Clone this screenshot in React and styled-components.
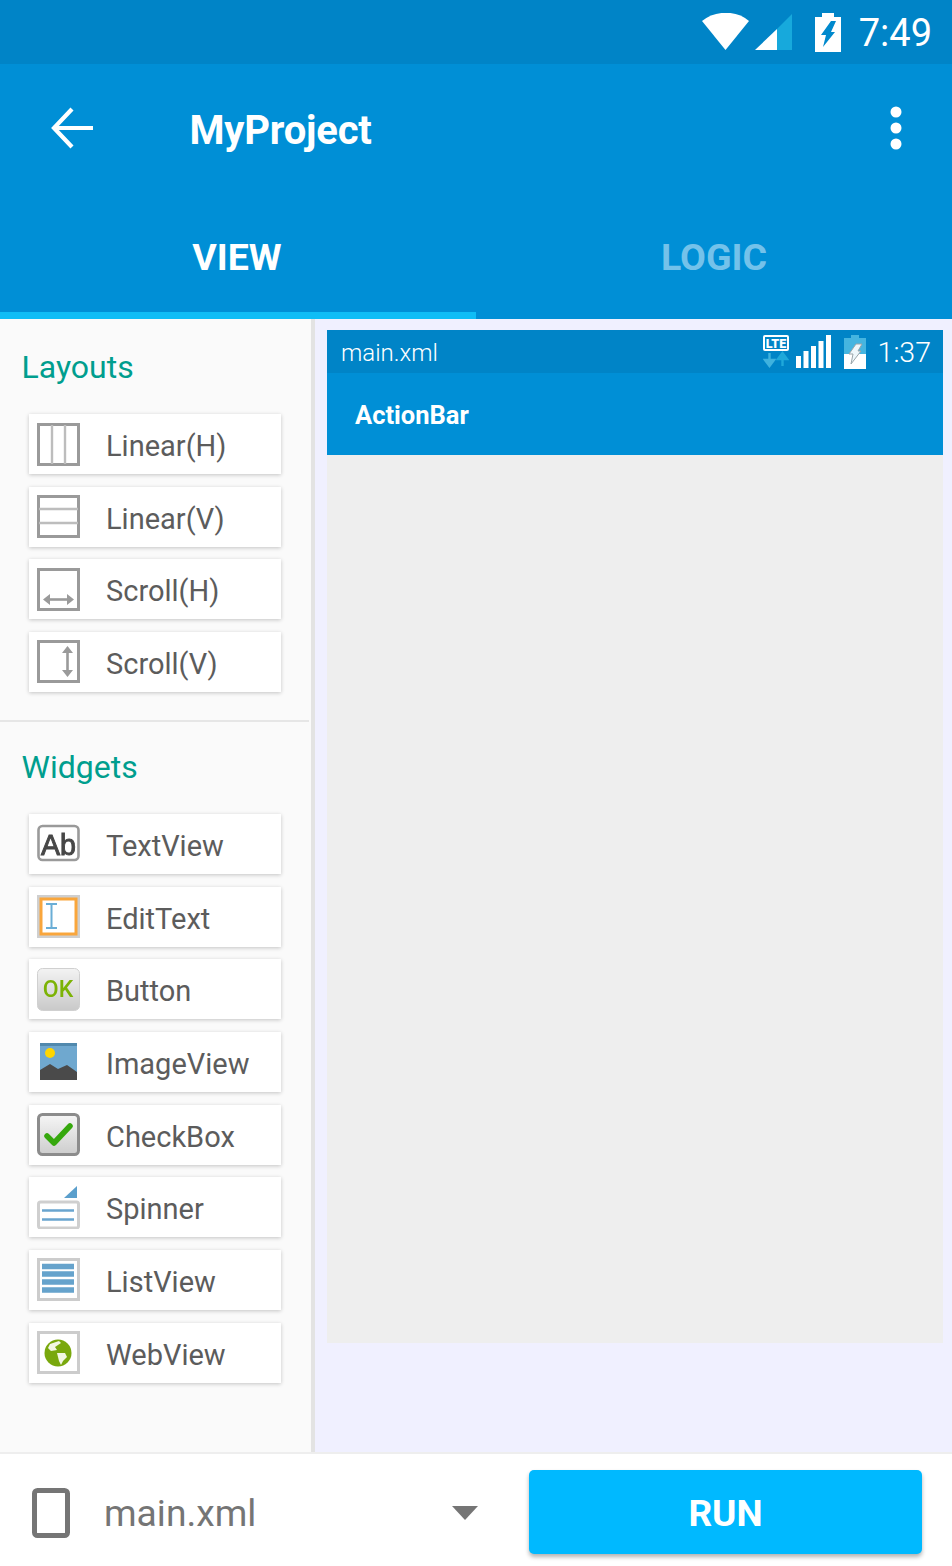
import React from "react";
import styled, { createGlobalStyle } from "styled-components";

const Global = createGlobalStyle`
  html, body { margin: 0; padding: 0; background: #fff; }
  * { box-sizing: border-box; }
  body { font-family: Roboto, "Noto Sans", sans-serif; }
`;

const Screen = styled.div`
  width: 952px; height: 1566px; display: flex; flex-direction: column; overflow: hidden;
`;
const StatusBar = styled.div`
  height: 64px; background: #0084c7; display: flex; align-items: center; justify-content: flex-end;
  padding-right: 20px; color: #fff;
`;
const StatusTime = styled.span`
  font-size: 38px; margin-left: 18px; color: #fff; line-height: 64px; position: relative; top: 1px;
`;
const AppBar = styled.div`
  height: 255px; background: #008fd6; display: flex; flex-direction: column;
`;
const ToolRow = styled.div`
  height: 128px; display: flex; align-items: center; padding: 0 0 0 50px;
`;
const Title = styled.div`
  font-size: 40px; font-weight: 700; color: #fff; margin-left: 93.5px; flex: 1; padding-top: 4px; letter-spacing: -0.2px;
`;
const Tabs = styled.div`
  height: 127px; display: flex;
`;
const Tab = styled.div`
  width: 476px; height: 127px; display: flex; align-items: center; justify-content: center;
  padding-top: 10px; font-size: 37.5px; font-weight: 700; color: ${p => p.$active ? "#fff" : "#74c2ea"};
  border-bottom: 7px solid ${p => p.$active ? "#0fbdf6" : "transparent"};
  padding-right: ${p => p.$active ? "2px" : "0"};
`;
const Body = styled.div`
  flex: 1; display: flex; min-height: 0;
`;
const Palette = styled.div`
  width: 315px; background: #fafafa; border-right: 4px solid #e3e3e3; display: flex; flex-direction: column;
`;
const Section = styled.div`
  display: flex; flex-direction: column;
`;
const SectionTitle = styled.div`
  color: #009e8e; font-size: 32px; line-height: 40px; padding-left: 21.5px; margin-top: ${p => p.$top}px; margin-bottom: 27px;
`;
const Items = styled.div`
  display: flex; flex-direction: column; gap: 12.67px; padding-left: 29px;
`;
const Item = styled.div`
  width: 252px; height: 60px; background: #fff; display: flex; align-items: center; padding-left: 8px;
  box-shadow: 0 1px 4px rgba(0,0,0,0.22);
`;
const IconBox = styled.svg`
  width: 43px; height: 43px; flex: none; display: block; filter: blur(0.45px);
`;
const ItemLabel = styled.span`
  margin-left: 26px; font-size: 29px; color: #5c5c5c; line-height: 60px; position: relative; top: 2px;
`;
const Divider = styled.div`
  height: 2px; background: #e6e6e6; width: 309px; margin-top: 28px;
`;
const Stage = styled.div`
  flex: 1; background: #f0f0ff; padding: 11px 9px 109px 12px; display: flex; min-width: 0;
`;
const Device = styled.div`
  flex: 1; background: #eeeeee; display: flex; flex-direction: column;
`;
const DeviceStatus = styled.div`
  height: 43px; background: #0084c7; display: flex; align-items: center; padding: 0 12px 0 14px; color: #fff;
`;
const DeviceName = styled.span`
  font-size: 24px; font-weight: 300; flex: 1; color: #fff; position: relative; top: 1px;
`;
const DeviceTime = styled.span`
  font-size: 28.5px; font-weight: 300; margin-left: 12px; color: #fff; position: relative; top: 1px;
`;
const DeviceBar = styled.div`
  height: 82px; background: #008fd6; color: #fff; font-size: 25.5px; font-weight: 700; padding: 0 28px; line-height: 85px;
`;
const Bottom = styled.div`
  height: 114px; flex: none; background: #fff; border-top: 2px solid #eeeeee; display: flex; align-items: center; padding-left: 32px;
`;
const Selector = styled.div`
  width: 497px; display: flex; align-items: center; padding-top: 6px;
`;
const FileName = styled.span`
  margin-left: 34px; font-size: 37.2px; color: #757575; flex: 1; font-weight: 400;
`;
const RunButton = styled.button`
  width: 393px; height: 84px; margin-top: 4px; border: 0; border-radius: 5px; background: #00b9ff; color: #fff;
  font: 700 37px Roboto, sans-serif; box-shadow: 0 3px 4px rgba(0,0,0,0.3); padding: 2px 0 0;
`;
const Spacer = styled.span`
  width: ${p => p.$w}px; flex: none;
`;

const Wifi = () => (
  <svg width="48" height="38" viewBox="0 0 48 38" style={{ flex: "none" }}>
    <path d="M0 8 C13 -3 35 -3 47 8 L23.5 37 Z" fill="#fff" />
  </svg>
);
const Signal = () => (
  <svg width="38" height="38" viewBox="0 0 38 38" style={{ flex: "none", marginLeft: 5 }}>
    <path d="M37 1 V37 H22 V16 Z" fill="#17a9dc" />
    <path d="M22 16 V37 H0 Z" fill="#fff" />
  </svg>
);
const Battery = () => (
  <svg width="26" height="39" viewBox="0 0 26 39" style={{ flex: "none", marginLeft: 22 }}>
    <path d="M7 0 H19 V4 H26 V39 H0 V4 H7 Z" fill="#fff" />
    <path d="M16 8 H21 L16 19 H20 L8 34 L11 22 H6 Z" fill="#0089cd" />
  </svg>
);
const Back = () => (
  <svg width="46" height="46" viewBox="0 0 46 46" style={{ flex: "none" }}>
    <path d="M43 23 H5 M22 4 L4 23 L22 42" fill="none" stroke="#fff" strokeWidth="4.2" />
  </svg>
);
const Dots = () => (
  <svg width="14" height="44" viewBox="0 0 14 44" style={{ flex: "none", marginRight: 49 }}>
    <circle cx="7" cy="6" r="5.5" fill="#fff" /><circle cx="7" cy="22" r="5.5" fill="#fff" /><circle cx="7" cy="38" r="5.5" fill="#fff" />
  </svg>
);
const MiniNet = () => (
  <svg width="26" height="33" viewBox="0 0 26 33" style={{ flex: "none" }}>
    <rect x="1" y="1" width="24" height="14" rx="1" fill="#0084c7" stroke="#fff" strokeWidth="2" />
    <text x="13" y="13" textAnchor="middle" fontFamily="Roboto" fontWeight="900" fontSize="12.5" fill="#fff">LTE</text>
    <path d="M6.5 18 V26 M2 25 L6.5 31 L11 25 Z" stroke="#3fb2de" strokeWidth="2.4" fill="#3fb2de" />
    <path d="M19.5 31 V23 M15 24 L19.5 18 L24 24 Z" stroke="#1fa8da" strokeWidth="2.4" fill="#1fa8da" />
  </svg>
);
const MiniBars = () => (
  <svg width="35" height="33" viewBox="0 0 35 33" style={{ flex: "none", marginLeft: 7 }}>
    <rect x="0" y="21" width="5" height="12" fill="#fff" /><rect x="7.5" y="16" width="5" height="17" fill="#fff" />
    <rect x="15" y="11" width="5" height="22" fill="#fff" /><rect x="22.5" y="6" width="5" height="27" fill="#fff" />
    <rect x="30" y="0" width="5" height="33" fill="#fff" />
  </svg>
);
const MiniBattery = () => (
  <svg width="22" height="34" viewBox="0 0 22 34" style={{ flex: "none", marginLeft: 13 }}>
    <path d="M7 0 H15 V3 H22 V34 H0 V3 H7 Z" fill="#45b5e0" />
    <rect x="0" y="19" width="22" height="15" fill="#fff" />
    <path d="M12 9 H18 L14 16 H17 L7 29 L9 19 H5 Z" fill="#eef7fb" stroke="#9aa5aa" strokeWidth="1" />
  </svg>
);
const Phone = () => (
  <svg width="38" height="50" viewBox="0 0 38 50" style={{ flex: "none" }}>
    <rect x="2.5" y="2.5" width="33" height="45" rx="3" fill="none" stroke="#757575" strokeWidth="5" />
  </svg>
);
const Caret = () => (
  <svg width="26" height="14" viewBox="0 0 26 14" style={{ flex: "none" }}>
    <path d="M0 0 H26 L13 14 Z" fill="#757575" />
  </svg>
);

const G = "#9a9a9a";
const Frame = () => <rect x="1.5" y="1.5" width="40" height="40" fill="#fff" stroke={G} strokeWidth="3" />;
const LightFrame = () => <rect x="1.5" y="1.5" width="40" height="40" fill="#fff" stroke="#cccccc" strokeWidth="3" />;

const icons = {
  linearH: (<><Frame /><path d="M15 2 V41 M28 2 V41" stroke="#bdbdbd" strokeWidth="2.4" /></>),
  linearV: (<><Frame /><path d="M2 14 H41 M2 28 H41" stroke="#bdbdbd" strokeWidth="2.4" /></>),
  scrollH: (<><Frame /><path d="M9 31.5 H34" stroke={G} strokeWidth="2.6" /><path d="M13 26 L6 31.5 L13 37 Z M30 26 L37 31.5 L30 37 Z" fill={G} /></>),
  scrollV: (<><Frame /><path d="M30.5 9 V34" stroke={G} strokeWidth="2.6" /><path d="M25 13 L30.5 6 L36 13 Z M25 30 L30.5 37 L36 30 Z" fill={G} /></>),
  text: (<><rect x="1.5" y="4" width="40" height="34" rx="4" fill="#fff" stroke="#9a9a9a" strokeWidth="2.6" />
    <text x="21.5" y="33" textAnchor="middle" fontFamily="Liberation Sans" fontSize="30" stroke="#474747" strokeWidth="1" fill="#474747" textLength="35" lengthAdjust="spacingAndGlyphs">Ab</text></>),
  edit: (<><rect x="0" y="0" width="43" height="43" fill="#cfcfcf" /><rect x="4" y="4" width="35" height="35" fill="#fff" stroke="#f9a63c" strokeWidth="3" />
    <path d="M9 9 H20 M9 33 H20 M14.5 9 V33" stroke="#6aaed6" strokeWidth="2" fill="none" /></>),
  button: (<><defs><linearGradient id="btn" x1="0" y1="0" x2="0" y2="1"><stop offset="0" stopColor="#f3f3f3" /><stop offset="1" stopColor="#c9c9c9" /></linearGradient></defs>
    <rect x="0.5" y="0.5" width="42" height="42" rx="5" fill="url(#btn)" stroke="#d0d0d0" />
    <text x="21" y="29" textAnchor="middle" fontFamily="Roboto" fontWeight="500" fontSize="23" fill="#7cb305">OK</text></>),
  image: (<><rect x="3" y="3" width="37" height="37" fill="#6fa8cf" /><rect x="3" y="3" width="37" height="3" fill="#5189ad" />
    <circle cx="13" cy="13" r="5" fill="#ffd600" /><path d="M3 30 L13 24 L21 29 L30 25 L40 32 V40 H3 Z" fill="#4a4a4a" /></>),
  check: (<><defs><linearGradient id="chk" x1="0" y1="0" x2="0" y2="1"><stop offset="0" stopColor="#f6f6f6" /><stop offset="1" stopColor="#cdcdcd" /></linearGradient></defs>
    <rect x="1.5" y="1.5" width="40" height="40" rx="4" fill="url(#chk)" stroke="#8c8c8c" strokeWidth="3" />
    <path d="M10 23 L17 30 L33 13" fill="none" stroke="#36a80d" strokeWidth="5.5" strokeLinecap="round" strokeLinejoin="round" /></>),
  spinner: (<><rect x="1.5" y="16" width="40" height="26" rx="2" fill="#fff" stroke="#cfcfcf" strokeWidth="3" />
    <path d="M5 24.5 H37 M5 33.5 H37" stroke="#6aa5cf" strokeWidth="2.4" /><path d="M40 0 V12 H27 Z" fill="#5b9fcc" /></>),
  list: (<><LightFrame /><path d="M5 8.5 H37 M5 16 H37 M5 24 H37 M5 32 H37" stroke="#66a3cc" strokeWidth="5.4" /></>),
  web: (<><LightFrame /><circle cx="21" cy="22" r="13.5" fill="#79a80d" />
    <path d="M13 13 L22 10 L24 12 L18 16 L20 19 L14 20 L11 17 Z M20 22 L28 22 L30 26 L26 30 L24 34 L22 30 Z" fill="#f2f7e2" /></>),
};

const Widget = ({ icon, label }) => (
  <Item>
    <IconBox viewBox="0 0 43 43">{icons[icon]}</IconBox>
    <ItemLabel>{label}</ItemLabel>
  </Item>
);

const layouts = [["linearH", "Linear(H)"], ["linearV", "Linear(V)"], ["scrollH", "Scroll(H)"], ["scrollV", "Scroll(V)"]];
const widgets = [["text", "TextView"], ["edit", "EditText"], ["button", "Button"], ["image", "ImageView"], ["check", "CheckBox"], ["spinner", "Spinner"], ["list", "ListView"], ["web", "WebView"]];

export default function App() {
  return (
    <Screen>
      <Global />
      <StatusBar>
        <Wifi /><Signal /><Battery /><StatusTime>7:49</StatusTime>
      </StatusBar>
      <AppBar>
        <ToolRow>
          <Back />
          <Title>MyProject</Title>
          <Dots />
        </ToolRow>
        <Tabs>
          <Tab $active>VIEW</Tab>
          <Tab>LOGIC</Tab>
        </Tabs>
      </AppBar>
      <Body>
        <Palette>
          <Section>
            <SectionTitle $top={28}>Layouts</SectionTitle>
            <Items>{layouts.map(([i, l]) => <Widget key={l} icon={i} label={l} />)}</Items>
            <Divider />
          </Section>
          <Section>
            <SectionTitle $top={25}>Widgets</SectionTitle>
            <Items>{widgets.map(([i, l]) => <Widget key={l} icon={i} label={l} />)}</Items>
          </Section>
        </Palette>
        <Stage>
          <Device>
            <DeviceStatus>
              <DeviceName>main.xml</DeviceName>
              <MiniNet /><MiniBars /><MiniBattery /><DeviceTime>1:37</DeviceTime>
            </DeviceStatus>
            <DeviceBar>ActionBar</DeviceBar>
          </Device>
        </Stage>
      </Body>
      <Bottom>
        <Selector>
          <Phone />
          <FileName>main.xml</FileName>
          <Caret />
          <Spacer $w={51} />
        </Selector>
        <RunButton>RUN</RunButton>
      </Bottom>
    </Screen>
  );
}
